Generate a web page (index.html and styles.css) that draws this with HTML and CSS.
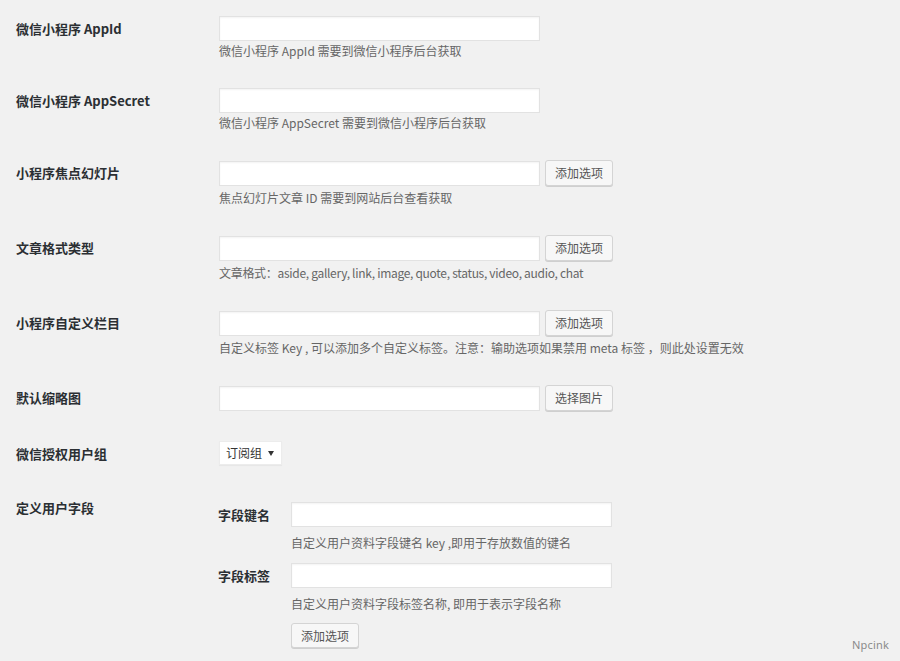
FILE: index.html
```html
<!DOCTYPE html>
<html lang="zh-CN">
<head>
<meta charset="utf-8">
<title>小程序设置</title>
<link rel="stylesheet" href="styles.css">
</head>
<body>
<div class="form">
  <div class="row">
    <div class="th">微信小程序 AppId</div>
    <div class="td">
      <input class="text" type="text">
      <p class="desc">微信小程序 AppId 需要到微信小程序后台获取</p>
    </div>
  </div>

  <div class="row">
    <div class="th">微信小程序 AppSecret</div>
    <div class="td">
      <input class="text" type="text">
      <p class="desc">微信小程序 AppSecret 需要到微信小程序后台获取</p>
    </div>
  </div>

  <div class="row">
    <div class="th">小程序焦点幻灯片</div>
    <div class="td">
      <div class="field">
        <input class="text" type="text">
        <button class="btn" type="button">添加选项</button>
      </div>
      <p class="desc wide">焦点幻灯片文章 ID 需要到网站后台查看获取</p>
    </div>
  </div>

  <div class="row">
    <div class="th">文章格式类型</div>
    <div class="td">
      <div class="field">
        <input class="text" type="text">
        <button class="btn" type="button">添加选项</button>
      </div>
      <p class="desc wide tight">文章格式：aside, gallery, link, image, quote, status, video, audio, chat</p>
    </div>
  </div>

  <div class="row">
    <div class="th">小程序自定义栏目</div>
    <div class="td">
      <div class="field">
        <input class="text" type="text">
        <button class="btn" type="button">添加选项</button>
      </div>
      <p class="desc wide">自定义标签 Key , 可以添加多个自定义标签。注意：输助选项如果禁用 meta 标签 ，则此处设置无效</p>
    </div>
  </div>

  <div class="row">
    <div class="th">默认缩略图</div>
    <div class="td">
      <div class="field">
        <input class="text" type="text">
        <button class="btn" type="button">选择图片</button>
      </div>
    </div>
  </div>

  <div class="row">
    <div class="th">微信授权用户组</div>
    <div class="td">
      <div class="select">
        <span>订阅组</span>
        <svg class="caret" width="6" height="5" viewBox="0 0 6 5"><path d="M0 0h6L3 5z" fill="#333"/></svg>
      </div>
    </div>
  </div>

  <div class="row">
    <div class="th">定义用户字段</div>
    <div class="td">
      <div class="sub">
        <div class="sub-th">字段键名</div>
        <div class="sub-td">
          <input class="text" type="text">
          <p class="desc sub-desc">自定义用户资料字段键名 key ,即用于存放数值的键名</p>
        </div>
        <div class="sub-th second">字段标签</div>
        <div class="sub-td second">
          <input class="text" type="text">
          <p class="desc sub-desc">自定义用户资料字段标签名称, 即用于表示字段名称</p>
        </div>
        <div class="sub-td actions">
          <button class="btn small" type="button">添加选项</button>
        </div>
      </div>
    </div>
  </div>
</div>
<div class="mark">Npcink</div>
</body>
</html>
```

FILE: styles.css
```css
html, body {
  margin: 0;
  height: 661px;
  overflow: hidden;
}

body {
  background: #f1f1f1;
  font-family: "Noto Sans CJK SC", "Noto Sans", sans-serif;
  color: #23282d;
  position: relative;
}

.form {
  padding-left: 16px;
}

.row {
  display: grid;
  grid-template-columns: 203px 1fr;
  padding: 16px 0 14px;
}

.th {
  font-size: 13px;
  font-weight: bold;
  line-height: 14px;
  padding-top: 6px;
  color: #2b2f33;
}

.text {
  display: block;
  box-sizing: border-box;
  width: 321px;
  height: 25px;
  margin: 0;
  padding: 0 6px;
  background: #fff;
  border: 1px solid #e2e2e2;
  box-shadow: inset 0 1px 2px rgba(0, 0, 0, 0.05);
  font: inherit;
  outline: none;
}

.desc {
  margin: 3px 0 0;
  font-size: 12px;
  line-height: 14px;
  color: #666;
  white-space: nowrap;
}

.desc.wide {
  margin-top: 5px;
}

.desc.tight {
  letter-spacing: -0.3px;
}

.field {
  display: flex;
  align-items: center;
  gap: 5px;
}

.btn {
  box-sizing: border-box;
  height: 26px;
  margin: 0;
  padding: 0 9px;
  background: #f7f7f7;
  border: 1px solid #d4d4d4;
  border-radius: 3px;
  box-shadow: 0 1px 0 #cfcfcf;
  color: #555;
  font-family: "Noto Sans CJK SC", sans-serif;
  font-size: 12px;
  line-height: 24px;
}

.btn.small {
  display: block;
  height: 25px;
  line-height: 23px;
}

.select {
  display: flex;
  align-items: center;
  justify-content: space-between;
  box-sizing: border-box;
  width: 63px;
  height: 24px;
  padding: 0 6px;
  background: #fff;
  border: 1px solid #ececec;
  box-shadow: 0 1px 1px rgba(0, 0, 0, 0.04);
  font-size: 12px;
  line-height: 14px;
  color: #333;
}

.caret {
  margin-right: 1px;
}

.sub {
  display: grid;
  grid-template-columns: 73px 321px;
  padding-top: 7px;
  margin-left: -1px;
}

.sub-th {
  font-size: 13px;
  font-weight: bold;
  line-height: 14px;
  padding-top: 6px;
  color: #2b2f33;
}

.sub-desc {
  margin-top: 9px;
}

.second {
  margin-top: 13px;
}

.actions {
  grid-column: 2;
  padding-top: 12px;
}

.mark {
  position: absolute;
  right: 11px;
  bottom: 9px;
  font-family: "Noto Sans", sans-serif;
  font-size: 11px;
  color: #8a8a8a;
  letter-spacing: 0.2px;
}
```
